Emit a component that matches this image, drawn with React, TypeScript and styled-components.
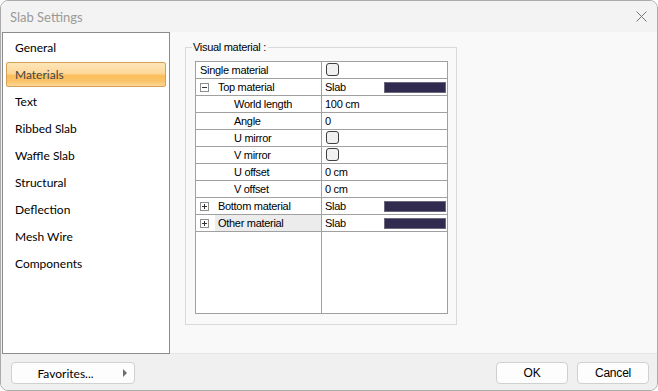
import React from 'react';
import styled, { createGlobalStyle, css } from 'styled-components';

const GlobalStyle = createGlobalStyle`
    html, body {
        margin: 0;
        padding: 0;
        background: #ffffff;
    }
    * {
        box-sizing: border-box;
    }
`

const Window = styled.div`
    width: 658px;
    height: 391px;
    display: flex;
    flex-direction: column;
    border: 1px solid #ababab;
    border-radius: 8px;
    background: #f0f0f0;
    overflow: hidden;
    font-family: Lato, "Liberation Sans", sans-serif;
`

const TitleBar = styled.header`
    height: 31px;
    flex: none;
    display: flex;
    align-items: center;
    justify-content: space-between;
    padding: 0 10px 0 9px;
    background: #f3f3f3;
    color: #9a9a9a;
    font-size: 13px;
`

const CloseButton = styled.button`
    border: none;
    background: transparent;
    padding: 0;
    width: 12px;
    height: 12px;
    display: flex;
    align-items: center;
    justify-content: center;
`

const Body = styled.div`
    flex: 1;
    display: flex;
    padding-left: 1px;
`

const NavList = styled.ul`
    width: 168px;
    flex: none;
    margin: 0;
    padding: 2px 0 0 0;
    list-style: none;
    background: #ffffff;
    border: 1px solid #8c8c8c;
`

const NavItem = styled.li<{ $active?: boolean }>`
    height: 25px;
    margin: 0 3px 2px 3px;
    padding-left: 8px;
    display: flex;
    align-items: center;
    font-size: 12px;
    color: #000000;
    border: 1px solid transparent;
    border-radius: 2px;
    ${({ $active }) => $active && css`
        color: #444444;
        border-color: #d6a155;
        background: linear-gradient(
            to bottom,
            #fde6b8 0%,
            #fdd89a 45%,
            #fbbd5a 55%,
            #fbc46c 80%,
            #fdd795 100%
        );
    `}
`

const Content = styled.section`
    flex: 1;
    background: #f9f9f9;
    border-bottom: 1px solid #e6e6e6;
    padding: 8px 0 0 15px;
`

const GroupBox = styled.fieldset`
    width: 272px;
    height: 285px;
    margin: 0;
    padding: 7px 8px 10px 9px;
    border: 1px solid #dadada;
    font-family: "Liberation Sans", Arial, sans-serif;
    font-size: 11px;
    letter-spacing: -0.3px;
`

const GroupTitle = styled.legend`
    margin-left: -3px;
    padding: 0 2px 0 1px;
    line-height: 14px;
    color: #000000;
`

const Grid = styled.div`
    height: 253px;
    display: flex;
    flex-direction: column;
    background: #ffffff;
    border: 1px solid #a0a0a0;
    color: #000000;
`

const Row = styled.div`
    height: 17px;
    flex: none;
    display: grid;
    grid-template-columns: 126px 1fr;
    border-bottom: 1px solid #a0a0a0;
`

const FillerRow = styled.div`
    flex: 1;
    display: grid;
    grid-template-columns: 126px 1fr;
`

const NameCell = styled.div<{ $indent: number }>`
    display: flex;
    align-items: center;
    padding-left: ${({ $indent }) => $indent}px;
    border-right: 1px solid #a0a0a0;
    line-height: 16px;
    white-space: nowrap;
`

const Label = styled.span<{ $highlight?: boolean }>`
    flex: 1;
    align-self: stretch;
    display: flex;
    align-items: center;
    margin-left: ${({ $highlight }) => ($highlight ? '-3px' : '0')};
    padding-left: ${({ $highlight }) => ($highlight ? '3px' : '0')};
    background: ${({ $highlight }) => ($highlight ? '#ececec' : 'transparent')};
`

const ValueCell = styled.div`
    display: flex;
    align-items: center;
    justify-content: space-between;
    padding: 0 1px 0 3px;
    line-height: 16px;
`

const Expander = styled.svg`
    flex: none;
    margin-right: 9px;
`

const CheckBox = styled.span`
    width: 13px;
    height: 13px;
    margin-left: 1px;
    margin-top: -2px;
    border: 1px solid #3f3f3f;
    border-radius: 3px;
    background: #f1f1f1;
`

const Swatch = styled.span`
    width: 62px;
    height: 11px;
    background: #302b4f;
    border: 1px solid #6b6a7c;
`

const Footer = styled.footer`
    height: 36px;
    flex: none;
    display: flex;
    align-items: flex-start;
    padding: 8px 8px 0 10px;
    gap: 9px;
    background: #f0f0f0;
`

const Button = styled.button<{ $wide?: boolean }>`
    height: 22px;
    width: ${({ $wide }) => ($wide ? '124px' : '72px')};
    display: flex;
    align-items: center;
    justify-content: center;
    padding: 0;
    border: 1px solid #d0d0d0;
    border-radius: 4px;
    background: #fdfdfd;
    color: #000000;
    font-family: "Liberation Sans", Arial, sans-serif;
    font-size: 12px;
    letter-spacing: -0.2px;
`

const FavoritesText = styled.span`
    flex: 1;
    text-align: center;
    padding-right: 4px;
    font-family: Lato, "Liberation Sans", sans-serif;
    letter-spacing: 0;
`

const Arrow = styled.span`
    width: 0;
    height: 0;
    margin-right: 7px;
    border-top: 4px solid transparent;
    border-bottom: 4px solid transparent;
    border-left: 4px solid #6f6f6f;
`

const Spacer = styled.div`
    flex: 1;
`

const navItems = [
    'General',
    'Materials',
    'Text',
    'Ribbed Slab',
    'Waffle Slab',
    'Structural',
    'Deflection',
    'Mesh Wire',
    'Components',
]

type Prop = {
    name: string
    level: number
    expander?: 'open' | 'closed'
    value?: string
    check?: boolean
    swatch?: boolean
    highlight?: boolean
}

const props: Prop[] = [
    { name: 'Single material', level: 0, check: true },
    { name: 'Top material', level: 0, expander: 'open', value: 'Slab', swatch: true },
    { name: 'World length', level: 1, value: '100 cm' },
    { name: 'Angle', level: 1, value: '0' },
    { name: 'U mirror', level: 1, check: true },
    { name: 'V mirror', level: 1, check: true },
    { name: 'U offset', level: 1, value: '0 cm' },
    { name: 'V offset', level: 1, value: '0 cm' },
    { name: 'Bottom material', level: 0, expander: 'closed', value: 'Slab', swatch: true },
    { name: 'Other material', level: 0, expander: 'closed', value: 'Slab', swatch: true, highlight: true },
]

const ExpandIcon = ({ open }: { open: boolean }) => (
    <Expander width="9" height="9" viewBox="0 0 9 9">
        <rect x="0.5" y="0.5" width="8" height="8" fill="#ffffff" stroke="#8d8d8d" />
        <line x1="2" y1="4.5" x2="7" y2="4.5" stroke="#333333" />
        {!open && <line x1="4.5" y1="2" x2="4.5" y2="7" stroke="#333333" />}
    </Expander>
)

const App = () => {
    return (
        <>
            <GlobalStyle />
            <Window>
                <TitleBar>
                    <span>Slab Settings</span>
                    <CloseButton aria-label="Close">
                        <svg width="11" height="11" viewBox="0 0 11 11">
                            <path d="M0.5 0.5 L10.5 10.5 M10.5 0.5 L0.5 10.5" stroke="#777777" strokeWidth="1" />
                        </svg>
                    </CloseButton>
                </TitleBar>
                <Body>
                    <NavList>
                        {navItems.map((item) => (
                            <NavItem key={item} $active={item === 'Materials'}>{item}</NavItem>
                        ))}
                    </NavList>
                    <Content>
                        <GroupBox>
                            <GroupTitle>Visual material :</GroupTitle>
                            <Grid>
                                {props.map((p) => (
                                    <Row key={p.name}>
                                        <NameCell $indent={p.level === 1 ? 38 : p.expander ? 4 : 4}>
                                            {p.expander && <ExpandIcon open={p.expander === 'open'} />}
                                            <Label $highlight={p.highlight}>{p.name}</Label>
                                        </NameCell>
                                        <ValueCell>
                                            {p.check ? <CheckBox /> : <span>{p.value}</span>}
                                            {p.swatch && <Swatch />}
                                        </ValueCell>
                                    </Row>
                                ))}
                                <FillerRow>
                                    <NameCell $indent={0} />
                                    <div />
                                </FillerRow>
                            </Grid>
                        </GroupBox>
                    </Content>
                </Body>
                <Footer>
                    <Button $wide>
                        <FavoritesText>Favorites...</FavoritesText>
                        <Arrow />
                    </Button>
                    <Spacer />
                    <Button>OK</Button>
                    <Button>Cancel</Button>
                </Footer>
            </Window>
        </>
    );
}

export default App;
